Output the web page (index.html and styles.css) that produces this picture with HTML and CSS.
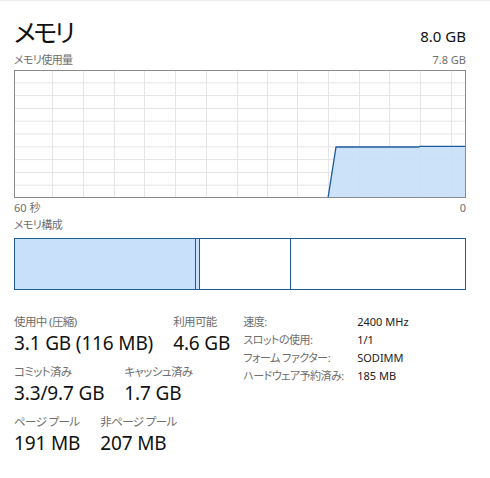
FILE: index.html
```html
<!DOCTYPE html>
<html lang="ja">
<head>
<meta charset="utf-8">
<link rel="stylesheet" href="styles.css">
</head>
<body>
<div class="panel">
  <div class="head">
    <div class="title">メモリ</div>
    <div class="total">8.0 GB</div>
  </div>
  <div class="caption-row">
    <span class="jp">メモリ使用量</span><span>7.8 GB</span>
  </div>
  <div class="graph">
    <svg width="450" height="126" viewBox="1 1 450 126">
      <g stroke="#e5e5e5" stroke-width="1">
        <line x1="38.5" y1="0" x2="38.5" y2="128"/>
        <line x1="69.5" y1="0" x2="69.5" y2="128"/>
        <line x1="100.5" y1="0" x2="100.5" y2="128"/>
        <line x1="130.5" y1="0" x2="130.5" y2="128"/>
        <line x1="161.5" y1="0" x2="161.5" y2="128"/>
        <line x1="192.5" y1="0" x2="192.5" y2="128"/>
        <line x1="223.5" y1="0" x2="223.5" y2="128"/>
        <line x1="253.5" y1="0" x2="253.5" y2="128"/>
        <line x1="283.5" y1="0" x2="283.5" y2="128"/>
        <line x1="314.5" y1="0" x2="314.5" y2="128"/>
        <line x1="345.5" y1="0" x2="345.5" y2="128"/>
        <line x1="375.5" y1="0" x2="375.5" y2="128"/>
        <line x1="406.5" y1="0" x2="406.5" y2="128"/>
        <line x1="437.5" y1="0" x2="437.5" y2="128"/>
        <line x1="0" y1="12.8" x2="452" y2="12.8"/>
        <line x1="0" y1="25.6" x2="452" y2="25.6"/>
        <line x1="0" y1="38.4" x2="452" y2="38.4"/>
        <line x1="0" y1="51.2" x2="452" y2="51.2"/>
        <line x1="0" y1="64" x2="452" y2="64"/>
        <line x1="0" y1="76.8" x2="452" y2="76.8"/>
        <line x1="0" y1="89.6" x2="452" y2="89.6"/>
        <line x1="0" y1="102.4" x2="452" y2="102.4"/>
        <line x1="0" y1="115.2" x2="452" y2="115.2"/>
      </g>
      <polygon points="314,128 322,77 404,77 406,76.3 452,76.3 452,128" fill="#c7dff8" fill-opacity="0.92"/>
      <polyline points="314,128 322,77 404,77 406,76.3 452,76.3" fill="none" stroke="#1d5c9c" stroke-width="1.3"/>
    </svg>
  </div>
  <div class="axis-row">
    <span>60 秒</span><span>0</span>
  </div>
  <div class="section-label jp">メモリ構成</div>
  <div class="composition">
    <div class="seg inuse"></div>
    <div class="seg modified"></div>
    <div class="seg standby"></div>
    <div class="seg free"></div>
  </div>
  <div class="stats">
    <div class="left">
      <div class="row">
        <div class="stat"><div class="lbl">使用中 (圧縮)</div><div class="val">3.1 GB (116 MB)</div></div>
        <div class="stat"><div class="lbl">利用可能</div><div class="val">4.6 GB</div></div>
      </div>
      <div class="row">
        <div class="stat"><div class="lbl">コミット済み</div><div class="val">3.3/9.7 GB</div></div>
        <div class="stat"><div class="lbl">キャッシュ済み</div><div class="val">1.7 GB</div></div>
      </div>
      <div class="row">
        <div class="stat"><div class="lbl">ページ プール</div><div class="val">191 MB</div></div>
        <div class="stat"><div class="lbl">非ページ プール</div><div class="val">207 MB</div></div>
      </div>
    </div>
    <div class="info">
      <div class="ik">速度:</div><div class="iv">2400 MHz</div>
      <div class="ik">スロットの使用:</div><div class="iv">1/1</div>
      <div class="ik">フォーム ファクター:</div><div class="iv">SODIMM</div>
      <div class="ik">ハードウェア予約済み:</div><div class="iv">185 MB</div>
    </div>
  </div>
</div>
</body>
</html>
```
FILE: styles.css
```css
html, body {
  margin: 0;
  padding: 0;
  background: #ffffff;
}
body {
  font-family: "Noto Sans", "Noto Sans CJK JP", sans-serif;
  font-feature-settings: "palt" 1;
  color: #000;
  border-top: 1px solid #ececec;
}
.panel {
  width: 452px;
  padding: 0 0 0 14px;
}
.head {
  display: flex;
  justify-content: space-between;
  align-items: baseline;
  height: 52px;
  padding-top: 13px;
  box-sizing: border-box;
}
.title {
  font-family: "Noto Sans CJK JP", sans-serif;
  font-size: 25px;
  line-height: 34px;
  font-weight: 400;
  letter-spacing: -2.5px;
  color: #111;
}
.total {
  font-size: 15px;
  line-height: 20px;
  color: #111;
}
.caption-row, .axis-row {
  display: flex;
  justify-content: space-between;
  font-size: 11px;
  color: #6e6e6e;
}
.jp {
  letter-spacing: -0.6px;
}
.caption-row {
  height: 17px;
  line-height: 14px;
}
.graph {
  width: 452px;
  height: 128px;
  box-sizing: border-box;
  border: 1px solid #8a8a8a;
}
.graph svg {
  display: block;
}
.axis-row {
  height: 18px;
  line-height: 18px;
  margin-top: 1px;
}
.section-label {
  font-size: 11px;
  color: #6e6e6e;
  height: 21px;
  line-height: 16px;
}
.composition {
  display: flex;
  width: 452px;
  height: 52px;
  box-sizing: border-box;
  border: 1px solid #1e5a8f;
}
.seg {
  height: 100%;
  box-sizing: border-box;
}
.inuse {
  width: 181px;
  background: #c9e0fa;
  border-right: 1px solid #1e5a8f;
}
.modified {
  width: 4px;
  background: #c9e0fa;
  border-right: 1px solid #1e5a8f;
}
.standby {
  width: 91px;
  border-right: 1px solid #1e5a8f;
}
.free {
  flex: 1;
}
.stats {
  display: flex;
  gap: 13px;
  margin-top: 24px;
}
.left {
  display: flex;
  flex-direction: column;
  flex: 0 0 215px;
}
.row {
  display: flex;
  gap: 20px;
  height: 50px;
  white-space: nowrap;
}
.lbl {
  font-size: 11.5px;
  line-height: 16px;
  letter-spacing: -0.6px;
  color: #6e6e6e;
}
.val {
  font-size: 19px;
  line-height: 26px;
  letter-spacing: -0.15px;
  color: #111;
}
.info {
  display: grid;
  grid-template-columns: 114px auto;
  grid-auto-rows: 18px;
  font-size: 11px;
  line-height: 18px;
  align-content: start;
  margin-top: -1px;
  white-space: nowrap;
}
.ik {
  color: #6e6e6e;
  letter-spacing: -0.5px;
}
.iv {
  color: #222;
}
```
